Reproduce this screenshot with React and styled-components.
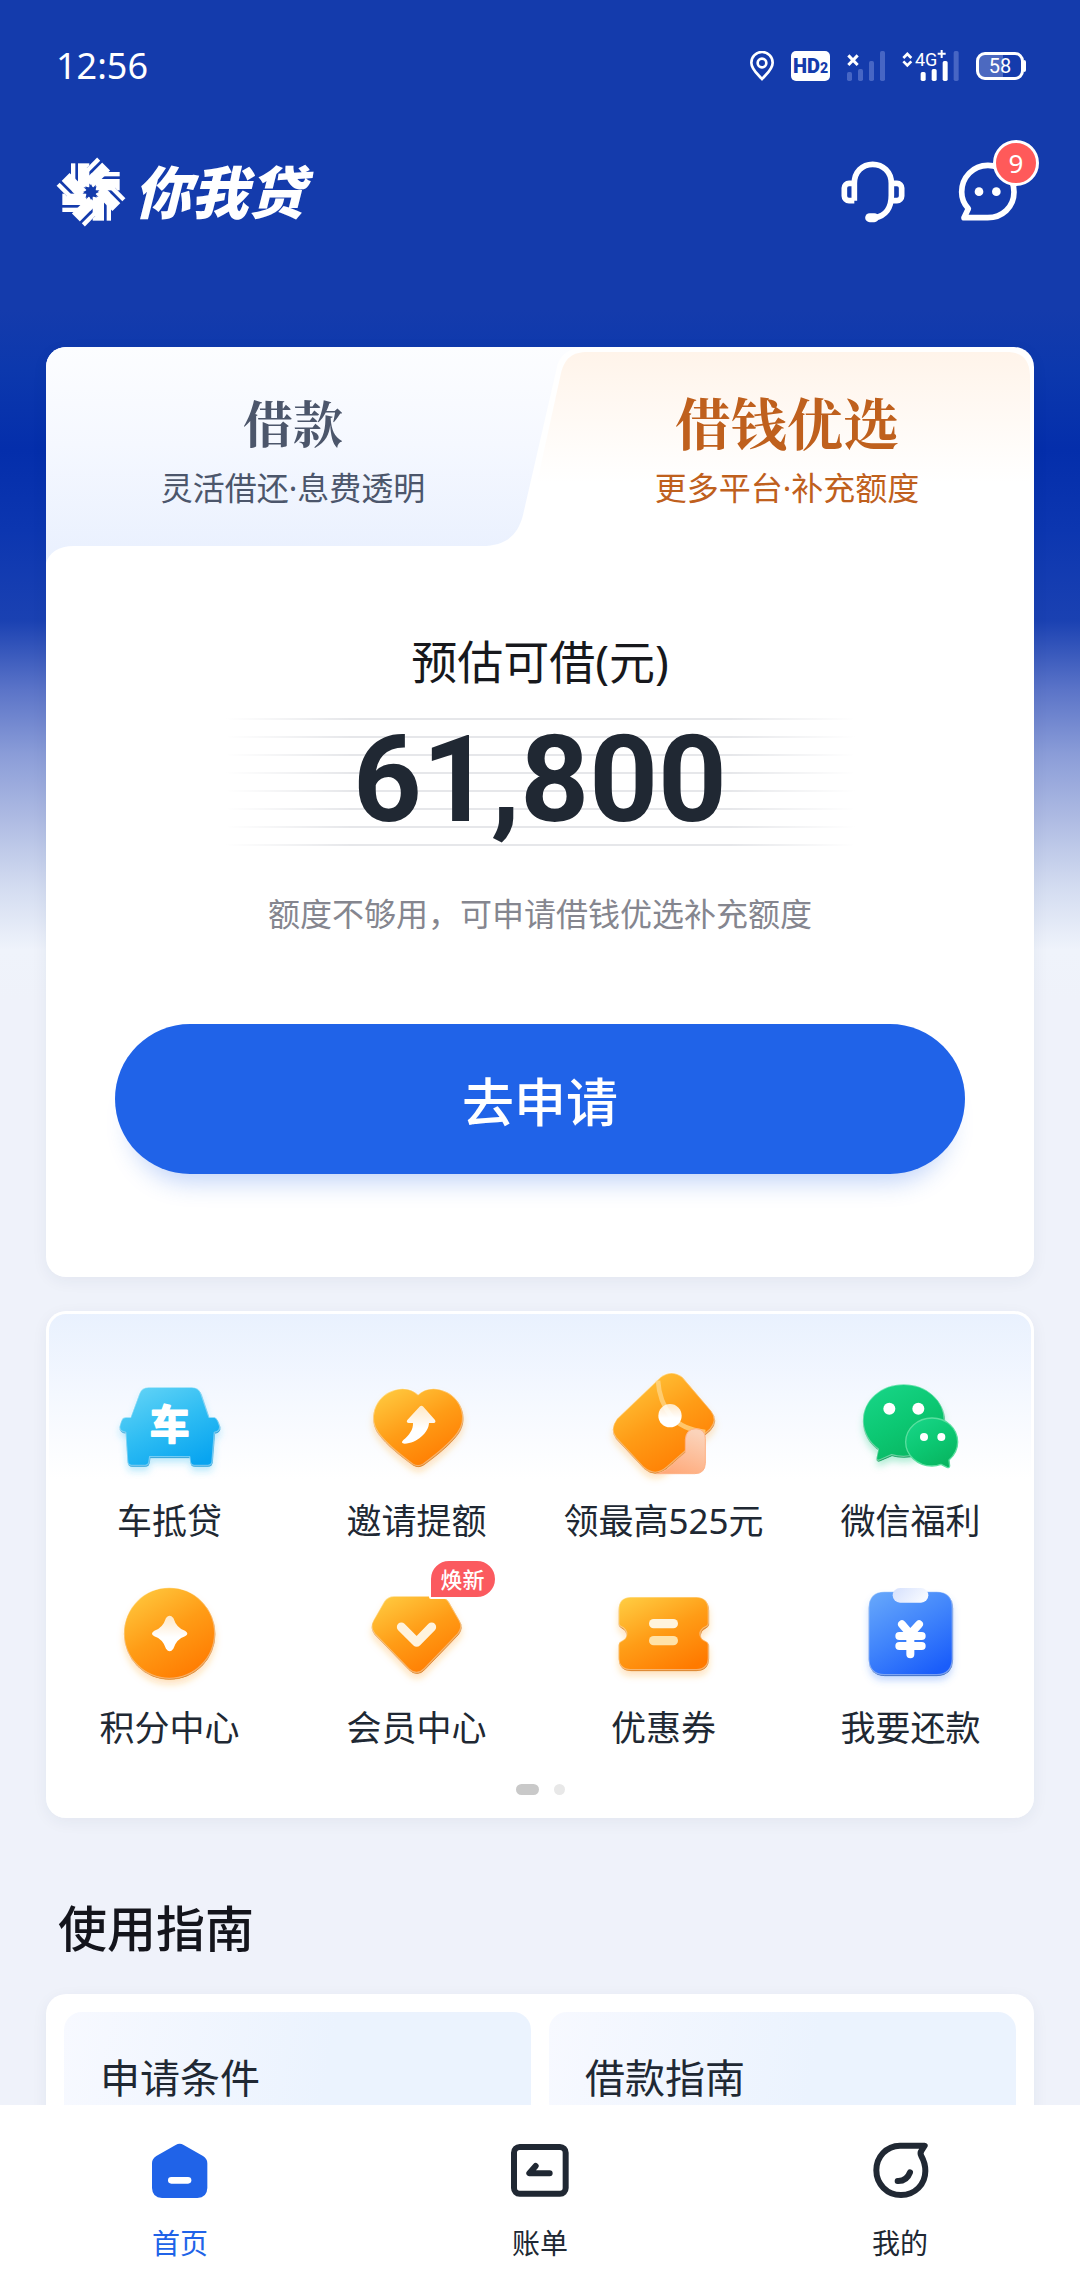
import React, { useState } from "react";
import styled, { createGlobalStyle } from "styled-components";

const sans = `"Noto Sans", "Noto Sans CJK SC", sans-serif`;
const serif = `"Noto Serif CJK SC", "Noto Sans CJK SC", serif`;

const GlobalStyle = createGlobalStyle`
  * { box-sizing: border-box; }
  body { margin: 0; background: #eff2fa; font-family: ${sans}; color: #202833; }
  h1, h2, p, ul { margin: 0; padding: 0; }
  ul { list-style: none; }
  button { border: 0; padding: 0; background: none; font: inherit; color: inherit; cursor: pointer; }
  a { color: inherit; text-decoration: none; }
`;

const Shell = styled.div`
  display: flex;
  flex-direction: column;
  height: 100vh;
`;

const Page = styled.div`
  flex: 1;
  min-height: 0;
  overflow-y: auto;
  scrollbar-width: none;
  background: linear-gradient(
    180deg,
    #143bac 0,
    #143bac 310px,
    #0c38ad 370px,
    #042eab 450px,
    #0c36b0 530px,
    #1a41b2 620px,
    #5b74c8 690px,
    #8b9dd8 755px,
    #acb9e2 815px,
    #d2dbf0 885px,
    #eff3fb 950px,
    #eff2fa 1000px
  ) no-repeat #eff2fa;
`;

/* status bar */
const StatusBar = styled.div`
  display: flex;
  align-items: center;
  justify-content: space-between;
  height: 132px;
  padding: 0 54px 0 56px;
  color: #fff;
`;

const Clock = styled.time`
  font-size: 36px;
  line-height: 48px;
`;

const StatusIcons = styled.div`
  display: flex;
  align-items: center;
  gap: 17px;
`;

const HdBadge = styled.span`
  display: flex;
  align-items: baseline;
  justify-content: center;
  width: 39px;
  height: 30px;
  border-radius: 5px;
  background: #fff;
  color: #143bac;
  font: 900 20px/30px Roboto, sans-serif;

  small { font-size: 14px; }
`;

const Battery = styled.span`
  display: flex;
  align-items: center;
  width: 50px;

  span {
    width: 48px;
    height: 28px;
    border: 3px solid #fff;
    border-radius: 9px;
    background: linear-gradient(90deg, #4c69c0 58%, #143bac 58%);
    font: 400 20px/22px Roboto, sans-serif;
    text-align: center;
  }

  &::after {
    content: "";
    width: 2px;
    height: 12px;
    background: #fff;
    border-radius: 0 2px 2px 0;
  }
`;

/* header */
const Header = styled.header`
  display: flex;
  align-items: center;
  justify-content: space-between;
  height: 120px;
  padding: 0 56px;
  color: #fff;
`;

const Brand = styled.h1`
  display: flex;
  align-items: center;
  gap: 8px;
  font: italic 900 57px/64px ${sans};
`;

const HeaderActions = styled.div`
  display: flex;
  gap: 43px;
`;

const IconButton = styled.button`
  position: relative;
  display: flex;
`;

const CountBadge = styled.span`
  position: absolute;
  top: -16px;
  right: -15px;
  width: 46px;
  height: 46px;
  border: 3px solid #fff;
  border-radius: 50%;
  background: #ff5a5a;
  font-size: 26px;
  line-height: 40px;
  text-align: center;
`;

const Main = styled.main`
  padding: 95px 46px 0;
`;

/* loan card */
const Card = styled.section`
  border-radius: 20px;
  background: #fff;
  box-shadow: 0 4px 16px rgba(40, 50, 80, 0.06);
`;

const Tabs = styled.div`
  position: relative;
  display: grid;
  grid-template-columns: 1fr 1fr;
  height: 216px;
`;

const TabShape = styled.svg`
  position: absolute;
  inset: 0;
  width: 100%;
  height: 100%;
  border-radius: 20px 20px 0 0;
`;

const Tab = styled.button`
  position: relative;
  display: flex;
  flex-direction: column;
  align-items: center;
  padding-top: 42px;
  color: ${(p) => (p.$accent ? "#bf601d" : "#4c566b")};
`;

const TabTitle = styled.span`
  font: ${(p) => (p.$large ? "700 56px" : "700 50px")} / 64px ${serif};
`;

const TabNote = styled.span`
  margin-top: 11px;
  font-size: 32px;
  line-height: 48px;
`;

const Offer = styled.div`
  display: flex;
  flex-direction: column;
  align-items: center;
  padding: 66px 69px 103px;
`;

const OfferTitle = styled.h2`
  font-size: 46px;
  font-weight: 400;
  line-height: 64px;
  color: #17181c;
`;

const Amount = styled.p`
  width: 74%;
  height: 128px;
  margin-top: 25px;
  background:
    linear-gradient(90deg, #fff, rgba(255, 255, 255, 0) 20%, rgba(255, 255, 255, 0) 80%, #fff),
    repeating-linear-gradient(180deg, #e6e7ea 0, #e6e7ea 2px, #fff 2px, #fff 18px);
  font: 700 120px/124px Roboto, sans-serif;
  text-align: center;
  color: #202833;
`;

const OfferNote = styled.p`
  margin-top: 44px;
  font-size: 32px;
  line-height: 48px;
  color: #85868f;
`;

const ApplyButton = styled.button`
  width: 100%;
  height: 150px;
  margin-top: 86px;
  border-radius: 75px;
  background: #2063e8;
  box-shadow: 0 24px 24px -16px rgba(32, 99, 232, 0.28);
  color: #fff;
  font-size: 52px;
  font-weight: 500;
`;

/* services */
const Services = styled(Card)`
  margin-top: 34px;
  padding: 53px 0 23px;
  border: 3px solid #fff;
  border-bottom: 0;
  background: linear-gradient(180deg, #e9f1fe 0, #f4f8ff 80px, #fff 165px);
`;

const ServiceGrid = styled.ul`
  display: grid;
  grid-template-columns: repeat(4, 1fr);
  row-gap: 29px;
  margin: 0 -3px;
`;

const ServiceLink = styled.a`
  position: relative;
  display: flex;
  flex-direction: column;
  align-items: center;
  gap: 10px;
  font-size: 35px;
  line-height: 48px;
  white-space: nowrap;
`;

const ServiceTag = styled.span`
  position: absolute;
  top: -15px;
  left: calc(50% + 12px);
  padding: 0 10px;
  border: 2px solid #fff;
  border-radius: 20px 20px 20px 2px;
  background: #fb5a5f;
  color: #fff;
  font-size: 22px;
  font-weight: 500;
  line-height: 36px;
`;

const Dots = styled.div`
  display: flex;
  justify-content: center;
  gap: 15px;
  margin-top: 32px;
`;

const Dot = styled.span`
  width: ${(p) => (p.$active ? 23 : 11)}px;
  height: 11px;
  border-radius: 6px;
  background: ${(p) => (p.$active ? "#c9c9c9" : "#e8e8e8")};
`;

/* guide */
const SectionTitle = styled.h2`
  margin: 74px 0 30px;
  padding-left: 12px;
  font-size: 49px;
  font-weight: 500;
  line-height: 72px;
  color: #14151c;
`;

const Guides = styled(Card)`
  display: grid;
  grid-template-columns: 1fr 1fr;
  gap: 18px;
  padding: 18px;
`;

const Guide = styled.a`
  min-height: 180px;
  padding: 38px 36px;
  border-radius: 18px;
  background: linear-gradient(100deg, #f7f9ff, #ebf3fe 55%);
  font-size: 40px;
  line-height: 56px;
`;

/* bottom navigation */
const NavBar = styled.nav`
  display: grid;
  grid-template-columns: repeat(3, 1fr);
  padding: 34px 0 17px;
  background: #fff;
`;

const NavItem = styled.a`
  display: flex;
  flex-direction: column;
  align-items: center;
  gap: 20px;
  font-size: 28px;
  line-height: 40px;
  color: ${(p) => (p.$active ? "#2063e8" : "#202833")};
`;

const arms = [0, 45, 90, 135, 180, 225, 270, 315];
const star = Array.from({ length: 16 }, (_, i) => {
  const r = i % 2 ? 13 : 24;
  const a = (i * Math.PI) / 8;
  return `${Math.round(r * Math.sin(a))},${Math.round(r * Math.cos(a))}`;
}).join(" ");

const LogoMark = () => (
  <svg width="70" height="70" viewBox="-105 -105 210 210" aria-hidden="true">
    <mask id="pinwheel">
      {arms.map((a) => (
        <rect key={a} x="-39" y="-86" width="34" height="72" fill="#fff" transform={`rotate(${a})`} />
      ))}
      {arms.map((a) => (
        <rect key={a} x="-60" y="-92" width="21" height="50" fill="#000" transform={`rotate(${a})`} />
      ))}
      {arms.map((a) => (
        <rect key={a} x="-60" y="-86" width="13" height="48" fill="#fff" transform={`rotate(${a})`} />
      ))}
      <polygon points={star} fill="#000" />
    </mask>
    <rect x="-105" y="-105" width="210" height="210" fill="#fff" mask="url(#pinwheel)" />
  </svg>
);

const PinIcon = () => (
  <svg width="24" height="30" viewBox="147 63 72 90" fill="none" stroke="#fff" strokeWidth="8">
    <path d="M183 147C170 132 151 118 151 98a32 32 0 0 1 64 0C215 118 196 132 183 147Z" />
    <circle cx="183" cy="99" r="13" />
  </svg>
);

const NoSignalIcon = () => (
  <svg width="38" height="30" viewBox="444 63 114 90" fill="#4766c4">
    <rect x="444" y="126" width="15" height="27" rx="5" />
    <rect x="477" y="117" width="15" height="36" rx="5" />
    <rect x="510" y="93" width="15" height="60" rx="5" />
    <rect x="543" y="63" width="15" height="90" rx="5" />
    <path d="M448 76l28 29M476 76l-28 29" stroke="#fff" strokeWidth="9" />
  </svg>
);

const SignalIcon = () => (
  <svg width="57" height="46" viewBox="601 39 171 138" fill="#fff">
    <path d="M605 84l12-12 12 12M605 94l12 12 12-12" fill="none" stroke="#fff" strokeWidth="8" />
    <text x="640" y="107" fontFamily="Roboto, sans-serif" fontSize="54">4G</text>
    <path d="M708 71h24M720 60v24" stroke="#fff" strokeWidth="6" />
    <rect x="657" y="126" width="15" height="27" rx="5" />
    <rect x="690" y="117" width="15" height="36" rx="5" />
    <rect x="723" y="93" width="15" height="60" rx="5" />
    <rect x="756" y="63" width="15" height="90" rx="5" fill="#4766c4" />
  </svg>
);

const HeadsetIcon = () => (
  <svg width="72" height="72" viewBox="410 380 216 216" fill="none" stroke="#fff" strokeWidth="17" strokeLinejoin="round">
    <path d="M462 514V462C462 428 486 405 517 405S573 428 573 462V498C573 536 556 560 524 565" />
    <path d="M462 462H446a14 14 0 0 0-14 14V500a14 14 0 0 0 14 14H462M573 462H590a14 14 0 0 1 14 14V500a14 14 0 0 1-14 14H573" />
    <path d="M508 565h14" strokeWidth="27" strokeLinecap="round" />
  </svg>
);

const ChatIcon = () => (
  <svg width="72" height="72" viewBox="755 380 216 216" fill="none" stroke="#fff" strokeWidth="17" strokeLinejoin="round">
    <path d="M804 538C791 524 784 507 784 488A78 80 0 0 1 862 408A78 80 0 0 1 941 488C941 534 905 565 862 565H791L804 538Z" />
    <circle cx="836" cy="487" r="13" fill="#fff" stroke="none" />
    <circle cx="888" cy="487" r="13" fill="#fff" stroke="none" />
  </svg>
);

const palettes = {
  orange: ["#ffc93f", "#ff9c16", "#ff7a00"],
  cyan: ["#62d3f6", "#2fbdf3", "#08a4f0"],
  green: ["#18d587", "#0cc873", "#08b45f"],
  blue: ["#64a5fb", "#3f83fb", "#1a5dfa"],
};

function ServiceIcon({ name, tone, x, y, children }) {
  const stops = palettes[tone];
  return (
    <svg width="120" height="120" viewBox={`${x} ${y} 360 360`} aria-hidden="true">
      <defs>
        <linearGradient id={`${name}-fill`} x1="0.15" y1="0" x2="0.75" y2="1">
          <stop offset="0" stopColor={stops[0]} />
          <stop offset="0.5" stopColor={stops[1]} />
          <stop offset="1" stopColor={stops[2]} />
        </linearGradient>
        <linearGradient id={`${name}-glyph`} x1="0" y1="0" x2="0" y2="1">
          <stop offset="0" stopColor="#fff" stopOpacity="0.75" />
          <stop offset="0.6" stopColor="#fff" />
        </linearGradient>
        <filter id={`${name}-glow`} x="-20%" y="-20%" width="140%" height="150%">
          <feDropShadow dx="0" dy="14" stdDeviation="11" floodColor={stops[1]} floodOpacity="0.3" />
        </filter>
      </defs>
      {children}
    </svg>
  );
}

/* Body of a service icon: glowing fill with a thin light rim inside a darker edge. */
const Body = ({ name, d, edge }) => (
  <g strokeLinejoin="round">
    <path d={d} fill={edge} stroke={edge} strokeWidth="2" transform="translate(1 3)" filter={`url(#${name}-glow)`} />
    <path d={d} fill={`url(#${name}-fill)`} stroke="#fff" strokeOpacity="0.4" strokeWidth="4" />
  </g>
);

const CarIcon = () => (
  <ServiceIcon name="car" tone="cyan" x={210} y={21}>
    <Body name="car" edge="#1598d6" d="M326 82H455Q476 82 483 101L507 172H524Q530 174 534 184L539 198Q541 215 523 217L516 305Q515 316 504 316H462Q452 316 451 305L449 290H329L327 305Q326 316 316 316H274Q264 316 263 305L257 217Q236 214 239 198L244 182Q248 172 257 172H272L298 101Q305 82 326 82Z" />
    <text x="389" y="238" textAnchor="middle" fontFamily="Noto Sans CJK SC, sans-serif" fontWeight="700" fontSize="118" fill="#fff" stroke="#fff" strokeWidth="6" strokeLinejoin="round">车</text>
  </ServiceIcon>
);

const HeartIcon = () => (
  <ServiceIcon name="heart" tone="orange" x={951} y={21}>
    <Body name="heart" edge="#d87410" d="M1134 104C1155 83 1190 80 1222 97C1266 120 1283 178 1253 219C1228 253 1187 285 1150 312Q1134 322 1118 312C1081 285 1040 253 1015 219C985 178 1002 120 1046 97C1078 80 1113 83 1134 104Z" />
    <path d="M1140 139Q1145 135 1150 140L1185 180Q1189 188 1181 189H1167C1166 218 1130 250 1094 251Q1080 250 1090 240C1108 226 1120 208 1119 189H1107Q1097 188 1102 180Z" fill="url(#heart-glyph)" />
  </ServiceIcon>
);

const WalletIcon = () => (
  <ServiceIcon name="wallet" tone="orange" x={192} y={21}>
    <defs>
      <linearGradient id="slip" x1="0.6" y1="0" x2="0.2" y2="1">
        <stop offset="0" stopColor="#fbd3ba" />
        <stop offset="1" stopColor="#ffa878" />
      </linearGradient>
    </defs>
    <Body name="wallet" edge="#d87410" d="M362 51Q395 27 427 51L513 152Q535 180 510 208L380 322Q345 352 311 322L228 233Q208 208 231 176Z" />
    <path d="M354 62Q358 125 393 168Q425 208 496 216" fill="none" stroke="#ffd78a" strokeOpacity="0.75" strokeWidth="14" />
    <path d="M436 238Q438 207 468 206Q496 207 496 236V310Q495 341 464 341H350Q378 336 398 312L436 278Z" fill="url(#slip)" stroke="#ffb184" strokeWidth="3" />
    <circle cx="390" cy="167" r="35" fill="url(#wallet-glyph)" />
  </ServiceIcon>
);

const WechatIcon = () => (
  <ServiceIcon name="wechat" tone="green" x={933} y={21}>
    <Body name="wechat" edge="#079953" d="M1091 73C1159 73 1213 121 1213 181S1159 289 1091 289Q1071 289 1055 284L1018 300Q1008 303 1010 292L1015 267C987 248 969 216 969 181C969 121 1023 73 1091 73Z" />
    <path d="M1176 174C1219 174 1253 205 1253 246C1253 267 1243 286 1227 300L1229 318Q1228 325 1221 322L1203 313Q1190 318 1176 318C1133 318 1097 286 1097 246S1133 174 1176 174Z" fill="url(#wechat-fill)" stroke="#5adf9f" strokeWidth="4" strokeLinejoin="round" />
    <g fill="#fff">
      <circle cx="1048" cy="146" r="18" />
      <circle cx="1135" cy="146" r="18" />
      <circle cx="1152" cy="231" r="12" />
      <circle cx="1204" cy="231" r="12" />
    </g>
  </ServiceIcon>
);

const CoinIcon = () => (
  <ServiceIcon name="coin" tone="orange" x={210} y={642}>
    <Body name="coin" edge="#d87410" d="M388 683A136 136 0 0 1 388 955A136 136 0 0 1 388 683Z" />
    <path d="M378 774Q389 760 400 774Q410 805 435 812Q449 821 435 829Q410 837 400 866Q389 881 378 866Q368 837 343 829Q329 821 343 812Q368 805 378 774Z" fill="url(#coin-glyph)" />
  </ServiceIcon>
);

const MemberIcon = () => (
  <ServiceIcon name="member" tone="orange" x={951} y={642}>
    <Body name="member" edge="#d87410" d="M1062 709H1196Q1214 709 1225 724L1257 780Q1270 801 1254 821L1153 926Q1130 949 1106 926L1004 821Q988 801 1001 780L1033 724Q1044 709 1062 709Z" />
    <path d="M1084 801L1130 847L1175 801" fill="none" stroke="#fff3de" strokeWidth="27" strokeLinecap="round" strokeLinejoin="round" />
  </ServiceIcon>
);

const CouponIcon = () => (
  <ServiceIcon name="coupon" tone="orange" x={192} y={642}>
    <Body name="coupon" edge="#d87410" d="M272 711H469Q505 712 505 748V790Q505 797 498 800Q480 808 480 822T498 844Q505 847 505 854V893Q505 928 469 929H272Q236 928 236 893V854Q236 847 243 844Q260 836 260 822T243 800Q236 797 236 790V748Q236 712 272 711Z" />
    <rect x="327" y="777" width="87" height="28" rx="14" fill="#fff4dd" />
    <rect x="327" y="828" width="87" height="28" rx="14" fill="#ffe2a8" />
  </ServiceIcon>
);

const RepayIcon = () => (
  <ServiceIcon name="repay" tone="blue" x={933} y={642}>
    <defs>
      <linearGradient id="clip" x1="0" y1="0" x2="1" y2="0.4">
        <stop offset="0" stopColor="#d5e0fd" />
        <stop offset="1" stopColor="#f6f9ff" />
      </linearGradient>
    </defs>
    <Body name="repay" edge="#2a5fc0" d="M1033 695H1190Q1237 696 1237 742V896Q1236 943 1190 944H1033Q987 943 986 896V742Q987 696 1033 695Z" />
    <rect x="1058" y="684" width="107" height="44" rx="22" fill="url(#clip)" />
    <path d="M1086 793L1111 822L1137 793M1111 822V883M1078 828H1145M1078 858H1145" fill="none" stroke="#fff" strokeWidth="24" strokeLinecap="round" strokeLinejoin="round" />
  </ServiceIcon>
);

const HomeIcon = () => (
  <svg width="64" height="64" viewBox="24 57 192 192" aria-hidden="true">
    <path d="M107 75Q119 68 131 75L189 108Q202 116 202 130V204Q201 233 172 234H66Q37 233 36 204V130Q36 116 49 108Z" fill="#2063e8" />
    <path d="M94 181H144" stroke="#fff" strokeWidth="20" strokeLinecap="round" />
  </svg>
);

const BillIcon = () => (
  <svg width="64" height="64" viewBox="1104 57 192 192" fill="none" stroke="#202833" strokeWidth="18" strokeLinecap="round" strokeLinejoin="round" aria-hidden="true">
    <rect x="1122" y="81" width="155" height="140" rx="17" />
    <path d="M1187 138L1168 160H1229" />
  </svg>
);

const ProfileIcon = () => (
  <svg width="64" height="64" viewBox="84 57 192 192" fill="none" stroke="#202833" strokeWidth="18" strokeLinecap="round" strokeLinejoin="round" aria-hidden="true">
    <path d="M254 77H180C139 78 109 110 109 151S141 225 183 225S256 193 256 153C256 137 253 124 244 108Q239 99 245 91Z" />
    <path d="M173 183Q200 184 210 157" />
  </svg>
);

const services = [
  { label: "车抵贷", Icon: CarIcon },
  { label: "邀请提额", Icon: HeartIcon },
  { label: "领最高525元", Icon: WalletIcon },
  { label: "微信福利", Icon: WechatIcon },
  { label: "积分中心", Icon: CoinIcon },
  { label: "会员中心", Icon: MemberIcon, tag: "焕新" },
  { label: "优惠券", Icon: CouponIcon },
  { label: "我要还款", Icon: RepayIcon },
];

const navItems = [
  { label: "首页", Icon: HomeIcon },
  { label: "账单", Icon: BillIcon },
  { label: "我的", Icon: ProfileIcon },
];

export default function App() {
  const [page, setPage] = useState("首页");
  return (
    <Shell lang="zh-CN">
      <GlobalStyle />
      <Page>
        <StatusBar>
          <Clock>12:56</Clock>
          <StatusIcons>
            <PinIcon />
            <HdBadge>HD<small>2</small></HdBadge>
            <NoSignalIcon />
            <SignalIcon />
            <Battery><span>58</span></Battery>
          </StatusIcons>
        </StatusBar>
        <Header>
          <Brand><LogoMark />你我贷</Brand>
          <HeaderActions>
            <IconButton aria-label="客服"><HeadsetIcon /></IconButton>
            <IconButton aria-label="消息"><ChatIcon /><CountBadge>9</CountBadge></IconButton>
          </HeaderActions>
        </Header>
        <Main>
          <Card>
            <Tabs role="tablist">
              <TabShape viewBox="0 0 988 216" preserveAspectRatio="none" aria-hidden="true">
                <defs>
                  <linearGradient id="tab-cool" x1="0" y1="0" x2="0" y2="1">
                    <stop offset="0" stopColor="#fcfdff" />
                    <stop offset="0.45" stopColor="#f5f8ff" />
                    <stop offset="1" stopColor="#e9f0fe" />
                  </linearGradient>
                  <linearGradient id="tab-warm" x1="0" y1="0" x2="0" y2="1">
                    <stop offset="0" stopColor="#fff4ea" />
                    <stop offset="0.8" stopColor="#fff" />
                  </linearGradient>
                </defs>
                <path d="M0 0H540C522 1 514 8 511 20L477 168C472 188 460 199 436 199H28C12 199 3 206 0 216Z" fill="url(#tab-cool)" />
                <path d="M484 168L515 26C519 11 526 5 542 5H960C976 5 983 12 984 28V168Z" fill="url(#tab-warm)" />
              </TabShape>
              <Tab role="tab" aria-selected="false">
                <TabTitle>借款</TabTitle>
                <TabNote>灵活借还·息费透明</TabNote>
              </Tab>
              <Tab role="tab" aria-selected="true" $accent>
                <TabTitle $large>借钱优选</TabTitle>
                <TabNote>更多平台·补充额度</TabNote>
              </Tab>
            </Tabs>
            <Offer>
              <OfferTitle>预估可借(元)</OfferTitle>
              <Amount>61,800</Amount>
              <OfferNote>额度不够用，可申请借钱优选补充额度</OfferNote>
              <ApplyButton>去申请</ApplyButton>
            </Offer>
          </Card>
          <Services>
            <ServiceGrid>
              {services.map(({ label, Icon, tag }) => (
                <li key={label}>
                  <ServiceLink href="#">
                    <Icon />
                    {tag && <ServiceTag>{tag}</ServiceTag>}
                    <span>{label}</span>
                  </ServiceLink>
                </li>
              ))}
            </ServiceGrid>
            <Dots><Dot $active /><Dot /></Dots>
          </Services>
          <SectionTitle>使用指南</SectionTitle>
          <Guides>
            <Guide href="#">申请条件</Guide>
            <Guide href="#">借款指南</Guide>
          </Guides>
        </Main>
      </Page>
      <NavBar>
        {navItems.map(({ label, Icon }) => (
          <NavItem key={label} href="#" $active={label === page} onClick={() => setPage(label)}>
            <Icon />
            <span>{label}</span>
          </NavItem>
        ))}
      </NavBar>
    </Shell>
  );
}
